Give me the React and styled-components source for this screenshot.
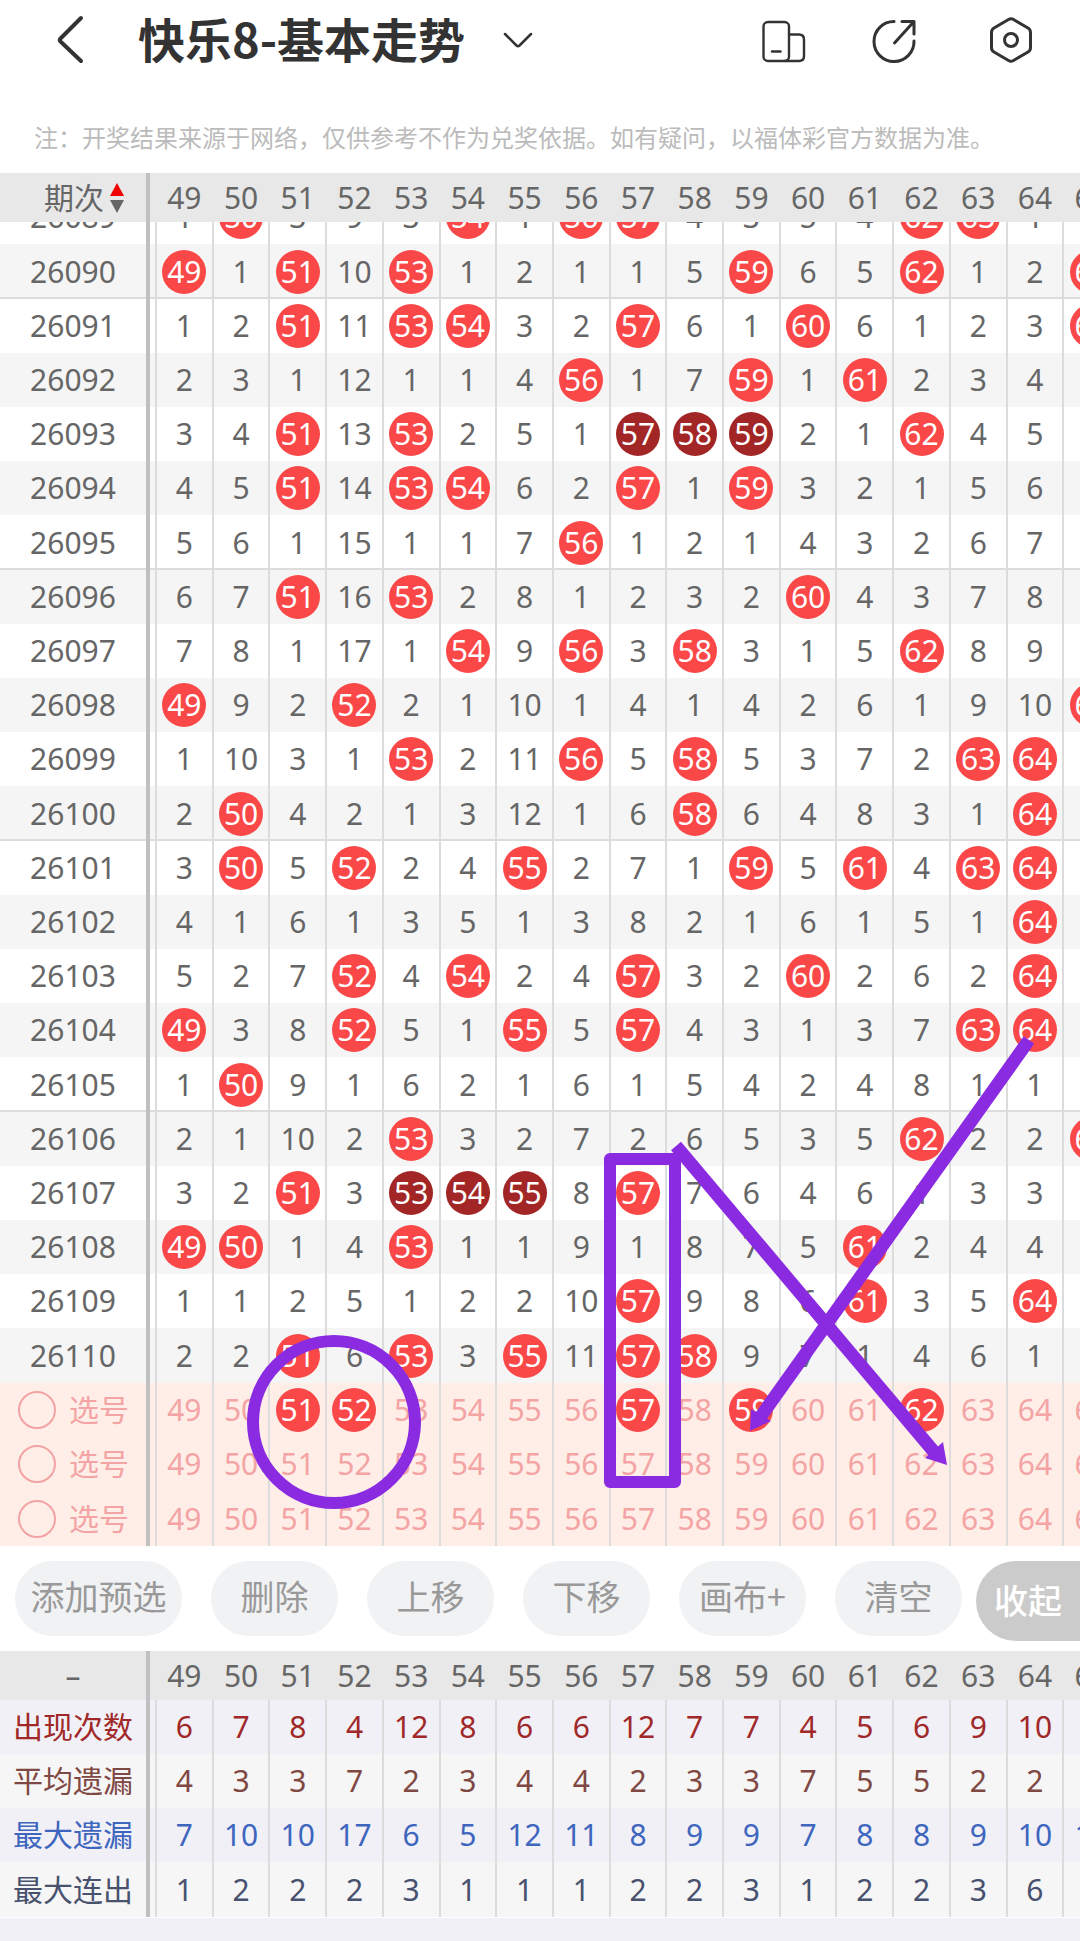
import { Fragment } from "react";
import styled, { createGlobalStyle } from "styled-components";

const GlobalStyle = createGlobalStyle`
  * {
    box-sizing: border-box;
  }
  body {
    margin: 0;
    background: #f1f0f6;
    color: #666;
    font-family: "Noto Sans", "Noto Sans CJK SC", sans-serif;
    font-size: 30px;
  }
  button {
    border: 0;
    padding: 0;
    background: none;
    color: inherit;
    font: inherit;
  }
`;

const Page = styled.main`
  background: #fff;
  overflow: hidden;
`;

const TopBar = styled.header`
  display: flex;
  align-items: center;
  height: 80px;
  padding: 0 45px 0 54px;
  color: #333;
`;

const IconButton = styled.button`
  display: flex;
  margin-left: ${(props) => props.$gap || 0}px;
`;

const Title = styled.h1`
  margin: 0 0 0 51px;
  padding-bottom: 4px;
  font-family: "Noto Sans CJK SC", sans-serif;
  font-size: 47px;
  line-height: 60px;
  font-weight: 700;
`;

const Actions = styled.div`
  display: flex;
  margin-left: auto;
`;

const Notice = styled.p`
  margin: 0;
  padding: 39px 34px 18px;
  color: #bbb;
  font-family: "Noto Sans CJK SC", sans-serif;
  font-size: 24px;
  line-height: 36px;
  white-space: nowrap;
`;

const Trend = styled.section`
  position: relative;
`;

const Marks = styled.svg`
  position: absolute;
  inset: 0;
  width: 100%;
  height: 100%;
  pointer-events: none;
`;

/* one column more than fits, the last one runs off the right edge */
const Table = styled.table`
  display: block;
  width: calc(100% + 39px);

  thead,
  tbody {
    display: block;
  }
`;

const Row = styled.tr`
  display: grid;
  grid-template-columns: 155px repeat(17, 1fr);
  grid-auto-rows: ${(props) => (props.$last ? 55 : 54)}px;
  align-content: end;
  height: ${(props) => (props.$cut ? "22px" : "auto")};
  overflow: hidden;
  background: ${(props) => props.$bg || "#fff"};
  color: ${(props) => props.$color || "#666"};
  --rule: ${(props) => (props.$ruled ? "inset 0 -2px #dcdcdc" : "none")};
`;

const HeadRow = styled(Row)`
  grid-auto-rows: 49px;
  background: #e8e8e8;
`;

const Label = styled.th`
  display: flex;
  padding: 0 5px 0 0;
  font-weight: 400;
  box-shadow: var(--rule);
`;

const LabelBox = styled.div`
  flex: 1;
  display: flex;
  align-items: center;
  justify-content: ${(props) => props.$align || "center"};
  gap: 6px;
  padding-right: ${(props) => (props.$align ? 22 : 0)}px;
  border-right: 4px solid #c0c0c0;
  line-height: 40px;
  white-space: nowrap;
`;

const HeadCell = styled.th`
  display: flex;
  align-items: center;
  justify-content: center;
  padding: 0 0 0 2px;
  font-weight: 400;
  line-height: 40px;
`;

const Cell = styled.td`
  display: flex;
  align-items: center;
  justify-content: center;
  padding: 0;
  border-left: 2px solid #dcdcdc;
  line-height: 40px;
  box-shadow: var(--rule);
`;

const Ball = styled.span`
  flex: none;
  width: 44px;
  border-radius: 50%;
  background: ${(props) => (props.$run ? "#a22626" : "#fa4848")};
  color: #fff;
  line-height: 44px;
  text-align: center;
`;

const PickLabel = styled.label`
  flex: 1;
  display: flex;
  align-items: center;
  gap: 13px;
  padding-left: 18px;
  border-right: 4px solid #c0c0c0;
  line-height: 40px;
`;

const PickRadio = styled.input`
  appearance: none;
  width: 38px;
  height: 38px;
  margin: 0;
  border: 2px solid #f3a3a3;
  border-radius: 50%;
`;

const Toolbar = styled.div`
  display: flex;
  align-items: flex-start;
  justify-content: space-between;
  padding: 15px 0 10px 15px;
  color: #999;
  font-family: "Noto Sans CJK SC", sans-serif;
  font-size: 34px;
`;

const ToolList = styled.div`
  display: flex;
  gap: 29px;
`;

const ToolButton = styled.button`
  flex: none;
  width: ${(props) => (props.$wide ? 167 : 127)}px;
  height: 75px;
  padding-bottom: 6px;
  border-radius: 38px;
  background: #f1f2f4;
`;

const FoldButton = styled.button`
  flex: none;
  width: 104px;
  height: 80px;
  padding-bottom: 4px;
  border-radius: 40px 0 0 40px;
  background: #cbcbcb;
  color: #fff;
  font-weight: 500;
`;

const Summary = styled.section`
  border-bottom: 1px solid #fff;
`;

const Bottom = styled.footer`
  height: 24px;
  background: #f1f0f6;
`;

const numbers = Array.from({ length: 17 }, (_, i) => 49 + i);

const firstMisses = [1, 0, 3, 9, 3, 0, 1, 0, 0, 4, 3, 5, 4, 0, 0, 1, 1];

const draws = [
  [26090, [49, 51, 53, 59, 62, 65]],
  [26091, [51, 53, 54, 57, 60, 65]],
  [26092, [56, 59, 61]],
  [26093, [51, 53, 57, 58, 59, 62]],
  [26094, [51, 53, 54, 57, 59]],
  [26095, [56]],
  [26096, [51, 53, 60]],
  [26097, [54, 56, 58, 62]],
  [26098, [49, 52, 65]],
  [26099, [53, 56, 58, 63, 64]],
  [26100, [50, 58, 64]],
  [26101, [50, 52, 55, 59, 61, 63, 64]],
  [26102, [64]],
  [26103, [52, 54, 57, 60, 64]],
  [26104, [49, 52, 55, 57, 63, 64]],
  [26105, [50]],
  [26106, [53, 62, 65]],
  [26107, [51, 53, 54, 55, 57]],
  [26108, [49, 50, 53, 61]],
  [26109, [57, 61, 64]],
  [26110, [51, 53, 55, 57, 58]],
];

const picks = [[51, 52, 57, 59, 62], [], []];

const summary = [
  { name: "出现次数", color: "#a02828", bg: "#f1f0f6", values: [6, 7, 8, 4, 12, 8, 6, 6, 12, 7, 7, 4, 5, 6, 9, 10, 4] },
  { name: "平均遗漏", color: "#804842", bg: "#f6f6f6", values: [4, 3, 3, 7, 2, 3, 4, 4, 2, 3, 3, 7, 5, 5, 2, 2, 6] },
  { name: "最大遗漏", color: "#3e66be", bg: "#f1f0f6", values: [7, 10, 10, 17, 6, 5, 12, 11, 8, 9, 9, 7, 8, 8, 9, 10, 10] },
  { name: "最大连出", color: "#48526e", bg: "#f6f6f6", values: [1, 2, 2, 2, 3, 1, 1, 1, 2, 2, 3, 1, 2, 2, 3, 6, 2] },
];

// every draw adds one to the miss count of the numbers that did not come out
const buildRows = () => {
  let misses = firstMisses;
  const rows = [{ issue: 26089, misses }];
  draws.forEach(([issue, hits]) => {
    misses = misses.map((miss, i) => (hits.includes(numbers[i]) ? 0 : miss + 1));
    rows.push({ issue, misses });
  });
  return rows;
};

const rows = buildRows();

// three or more neighbours in one draw get the dark ball
const inRun = (misses, i) => {
  let start = i;
  let end = i;
  while (misses[start - 1] === 0) start--;
  while (misses[end + 1] === 0) end++;
  return end - start >= 2;
};

const BackIcon = () => (
  <svg width="33" height="52" viewBox="0 0 33 52" fill="none" stroke="currentColor" strokeWidth="4" strokeLinecap="round" strokeLinejoin="round">
    <path d="M27 4 L6.5 24.5 Q5 26 6.5 27.5 L27 47" />
  </svg>
);

const DownIcon = () => (
  <svg width="30" height="20" viewBox="0 0 30 20" fill="none" stroke="currentColor" strokeWidth="2.5" strokeLinecap="round" strokeLinejoin="round">
    <path d="M2 4 L13.5 15.5 Q15 17 16.5 15.5 L28 4" />
  </svg>
);

const DeviceIcon = () => (
  <svg width="48" height="48" viewBox="0 0 48 48" fill="none" stroke="currentColor" strokeWidth="2.4" strokeLinecap="round">
    <rect x="3.500" y="6" width="25.500" height="39" rx="4.500" />
    <path d="M29 18.500 H39 Q44 18.500 44 23.500 V40 Q44 45 39 45 H25" />
    <path d="M12 35.500 H20.500" />
  </svg>
);

const ShareIcon = () => (
  <svg width="48" height="48" viewBox="0 0 48 48" fill="none" stroke="currentColor" strokeWidth="3" strokeLinecap="round" strokeLinejoin="round">
    <path d="M25 5.500 A20 20 0 1 0 45 25" />
    <path d="M33 5.500 H45 V18 M45 5.500 L25.500 27" />
  </svg>
);

const SettingIcon = () => (
  <svg width="48" height="48" viewBox="0 0 48 48" fill="none" stroke="currentColor" strokeWidth="3" strokeLinejoin="round">
    <path d="M21.5 3.5 Q24 2 26.5 3.5 L41 12 Q43.5 13.5 43.5 16.5 V32 Q43.5 34.5 41 36 L26.5 44.5 Q24 46 21.5 44.5 L7 36 Q4.5 34.5 4.5 32 V16.5 Q4.5 13.5 7 12 Z" />
    <circle cx="24" cy="24" r="6.5" />
  </svg>
);

const SortIcon = () => (
  <svg width="14" height="30" viewBox="0 0 14 30">
    <path d="M7 0 L14 13 H0 Z" fill="#f00000" />
    <path d="M7 30 L14 17 H0 Z" fill="#666" />
  </svg>
);

const NumberHead = ({ children }) => (
  <thead>
    <HeadRow>
      {children}
      {numbers.map((n) => (
        <HeadCell key={n} scope="col">{n}</HeadCell>
      ))}
    </HeadRow>
  </thead>
);

const DrawRow = ({ issue, misses, cut, newest }) => (
  <Row
    $bg={issue % 2 ? "#fff" : "#f5f5f5"}
    $last={issue % 5 === 0}
    $ruled={issue % 5 === 0 && !newest}
    $cut={cut}
  >
    <Label scope="row">
      <LabelBox>{issue}</LabelBox>
    </Label>
    {misses.map((miss, i) => (
      <Cell key={numbers[i]}>
        {miss === 0 ? <Ball $run={inRun(misses, i)}>{numbers[i]}</Ball> : miss}
      </Cell>
    ))}
  </Row>
);

const PickRow = ({ index, picked }) => (
  <Row $bg="#feeee7" $color="#f4a4a4" $last={index === picks.length - 1}>
    <Label scope="row">
      <PickLabel>
        <PickRadio type="radio" name="pick" value={index} />
        选号
      </PickLabel>
    </Label>
    {numbers.map((n) => (
      <Cell key={n}>{picked.includes(n) ? <Ball>{n}</Ball> : n}</Cell>
    ))}
  </Row>
);

const Drawing = () => (
  <Marks fill="none" stroke="#8a2be2" strokeWidth="12">
    <circle cx="334" cy="1249" r="81" />
    <rect x="610" y="986" width="65" height="323" strokeLinejoin="round" />
    <path d="M676 973 L935 1280" strokeWidth="13" />
    <path d="M947 1292 L943 1269 L925 1285 Z" fill="#8a2be2" stroke="none" />
    <path d="M1029 867 L759 1246" strokeWidth="13" />
    <path d="M750 1258 L751 1236 L771 1248 Z" fill="#8a2be2" stroke="none" />
  </Marks>
);

const App = () => {
  return (
    <Fragment>
      <GlobalStyle />
      <Page>
        <TopBar>
          <IconButton aria-label="返回"><BackIcon /></IconButton>
          <Title>快乐8-基本走势</Title>
          <IconButton aria-label="切换走势" $gap={38}><DownIcon /></IconButton>
          <Actions>
            <IconButton aria-label="横屏"><DeviceIcon /></IconButton>
            <IconButton aria-label="分享" $gap={61}><ShareIcon /></IconButton>
            <IconButton aria-label="设置" $gap={70}><SettingIcon /></IconButton>
          </Actions>
        </TopBar>
        <Notice>注：开奖结果来源于网络，仅供参考不作为兑奖依据。如有疑问，以福体彩官方数据为准。</Notice>
        <Trend>
          <Table>
            <NumberHead>
              <Label scope="col">
                <LabelBox $align="flex-end">期次<SortIcon /></LabelBox>
              </Label>
            </NumberHead>
            <tbody>
              {rows.map((row, i) => (
                <DrawRow
                  key={row.issue}
                  issue={row.issue}
                  misses={row.misses}
                  cut={i === 0}
                  newest={i === rows.length - 1}
                />
              ))}
              {picks.map((picked, i) => (
                <PickRow key={i} index={i} picked={picked} />
              ))}
            </tbody>
          </Table>
          <Drawing />
        </Trend>
        <Toolbar>
          <ToolList>
            <ToolButton $wide>添加预选</ToolButton>
            <ToolButton>删除</ToolButton>
            <ToolButton>上移</ToolButton>
            <ToolButton>下移</ToolButton>
            <ToolButton>画布+</ToolButton>
            <ToolButton>清空</ToolButton>
          </ToolList>
          <FoldButton>收起</FoldButton>
        </Toolbar>
        <Summary>
          <Table>
            <NumberHead>
              <Label scope="col">
                <LabelBox>–</LabelBox>
              </Label>
            </NumberHead>
            <tbody>
              {summary.map((item, i) => (
                <Row key={item.name} $bg={item.bg} $color={item.color} $last={i === summary.length - 1}>
                  <Label scope="row">
                    <LabelBox>{item.name}</LabelBox>
                  </Label>
                  {item.values.map((value, n) => (
                    <Cell key={numbers[n]}>{value}</Cell>
                  ))}
                </Row>
              ))}
            </tbody>
          </Table>
        </Summary>
        <Bottom />
      </Page>
    </Fragment>
  );
};

export default App;
